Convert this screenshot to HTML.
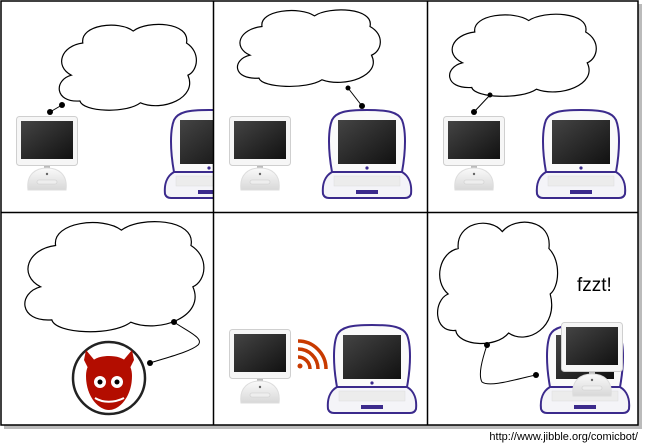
<!DOCTYPE html>
<html><head><meta charset="utf-8"><style>
body{margin:0;background:#fff;width:645px;height:443px;overflow:hidden;font-family:"Liberation Sans",sans-serif}
</style></head><body>
<svg width="645" height="443" viewBox="0 0 645 443" xmlns="http://www.w3.org/2000/svg">
<defs>
<linearGradient id="scr" x1="0" y1="0" x2="1" y2="1"><stop offset="0" stop-color="#444"/><stop offset="1" stop-color="#111"/></linearGradient>
<linearGradient id="dome" x1="0" y1="0" x2="0" y2="1"><stop offset="0" stop-color="#fafafa"/><stop offset="1" stop-color="#d8d8d8"/></linearGradient>
<path id="cloud" d="M20,25 C18,5 45,0 55,12 C65,0 95,2 92,25 C102,35 100,55 93,60 C100,85 75,100 60,90 C50,102 20,100 18,88 C0,90 0,65 12,60 C0,50 5,28 20,25 Z" fill="#fff" stroke="#000" stroke-width="1.2" vector-effect="non-scaling-stroke"/>
<g id="imac">
<rect x="0.5" y="0.5" width="61" height="49" rx="3" fill="#f6f6f6" stroke="#cfcfcf"/>
<rect x="5" y="5" width="52" height="38" fill="url(#scr)"/>
<rect x="28" y="50" width="6" height="4" fill="#bbb"/>
<path d="M12,74 C10,58 20,52 31,52 C42,52 52,58 50,74 Z" fill="url(#dome)" stroke="#ddd"/>
<rect x="21" y="64" width="20" height="4" rx="2" fill="#eee" stroke="#ccc" stroke-width="0.6"/>
<circle cx="31" cy="58" r="1.2" fill="#666"/>
</g>
<g id="ibook">
<path d="M10,62 C6,40 6,20 10,10 C14,2 24,0 45,0 C66,0 76,2 80,10 C84,20 84,40 80,62 Z" fill="#fafafa" stroke="#3b2a8c" stroke-width="2"/>
<rect x="16" y="10" width="58" height="44" fill="url(#scr)"/>
<circle cx="45" cy="58" r="1.6" fill="#3b2a8c"/>
<path d="M10,62 L80,62 C87,66 90,74 89,84 C88,87 86,88 83,88 L7,88 C4,88 2,87 1,84 C0,74 3,66 10,62 Z" fill="#f4f4f8" stroke="#3b2a8c" stroke-width="2"/>
<rect x="12" y="66" width="66" height="10" fill="#ececec" stroke="#ddd" stroke-width="0.5"/>
<rect x="34" y="80" width="22" height="4" fill="#3b2a8c"/>
</g>
</defs>
<rect x="4" y="4" width="638" height="425" fill="#bbb"/>
<rect x="1" y="1" width="637" height="424" fill="#fff" stroke="#000" stroke-width="1.5"/>
<!-- panel 1 -->
<use href="#imac" x="16" y="116"/>
<svg x="0" y="0" width="213" height="212"><use href="#ibook" x="164" y="110"/></svg>
<use href="#cloud" transform="translate(54,20) scale(1.44,0.92)"/>
<line x1="50" y1="112" x2="62" y2="105" stroke="#000"/><circle cx="50" cy="112" r="3" /><circle cx="62" cy="105" r="3"/>
<!-- panel 2 -->
<use href="#imac" x="229" y="116"/>
<use href="#ibook" x="322" y="110"/>
<use href="#cloud" transform="translate(232,6) scale(1.5,0.82)"/>
<line x1="348" y1="88" x2="362" y2="106" stroke="#000"/><circle cx="348" cy="88" r="2.5"/><circle cx="362" cy="106" r="3"/>
<!-- panel 3 -->
<use href="#imac" x="443" y="116"/>
<use href="#ibook" x="536" y="110"/>
<use href="#cloud" transform="translate(444,10) scale(1.54,0.88)"/>
<line x1="490" y1="95" x2="474" y2="112" stroke="#000"/><circle cx="490" cy="95" r="2.5"/><circle cx="474" cy="112" r="3"/>
<!-- panel 4 -->
<use href="#cloud" transform="translate(18,216) scale(1.88,1.18)"/>
<path d="M174,322 C185,330 205,338 198,345 C190,352 165,358 150,363" fill="none" stroke="#000"/>
<circle cx="174" cy="322" r="3"/><circle cx="150" cy="363" r="3"/>
<circle cx="109" cy="378" r="36" fill="#fff" stroke="#222" stroke-width="2.5"/>
<path d="M88,368 L84,360 L86,350 L96,362 Z M130,368 L134,360 L132,350 L122,362 Z" fill="#b30d00"/>
<path d="M86,376 C86,360 98,356 109,356 C120,356 132,360 132,376 C132,396 120,410 109,410 C98,410 86,396 86,376 Z" fill="#b30d00"/>
<circle cx="100" cy="382" r="6" fill="#fff"/><circle cx="117" cy="382" r="6" fill="#fff"/>
<circle cx="100" cy="382" r="2.5"/><circle cx="117" cy="382" r="2.5"/>
<path d="M95,398 C103,403 114,403 124,398" fill="none" stroke="#fff" stroke-width="2"/>
<!-- panel 5 -->
<use href="#imac" x="229" y="329"/>
<use href="#ibook" x="327" y="325"/>
<g fill="none" stroke="#c83a00" stroke-width="3.5">
<path d="M298,357 A12,12 0 0 1 310,369"/><path d="M298,349 A20,20 0 0 1 318,369"/><path d="M298,341 A28,28 0 0 1 326,369"/>
</g>
<circle cx="300" cy="366" r="2.5" fill="#c83a00"/>
<!-- panel 6 -->
<use href="#cloud" transform="translate(433,216) scale(1.26,1.3)"/>
<use href="#ibook" x="540" y="325"/>
<use href="#imac" x="561" y="322"/>
<path d="M487,345 C482,360 478,375 482,382 C490,388 520,378 536,375" fill="none" stroke="#000"/>
<circle cx="487" cy="345" r="3"/><circle cx="536" cy="375" r="3"/>
<text x="577" y="291" font-size="19" fill="#000" font-family="Liberation Sans, sans-serif">fzzt!</text>
<line x1="213.5" y1="1" x2="213.5" y2="425" stroke="#000" stroke-width="1.5"/>
<line x1="427.5" y1="1" x2="427.5" y2="425" stroke="#000" stroke-width="1.5"/>
<line x1="1" y1="212.5" x2="638" y2="212.5" stroke="#000" stroke-width="1.5"/>
<text x="638" y="440" font-size="11" text-anchor="end" fill="#000" font-family="Liberation Sans, sans-serif">http://www.jibble.org/comicbot/</text>
</svg>
</body></html>
